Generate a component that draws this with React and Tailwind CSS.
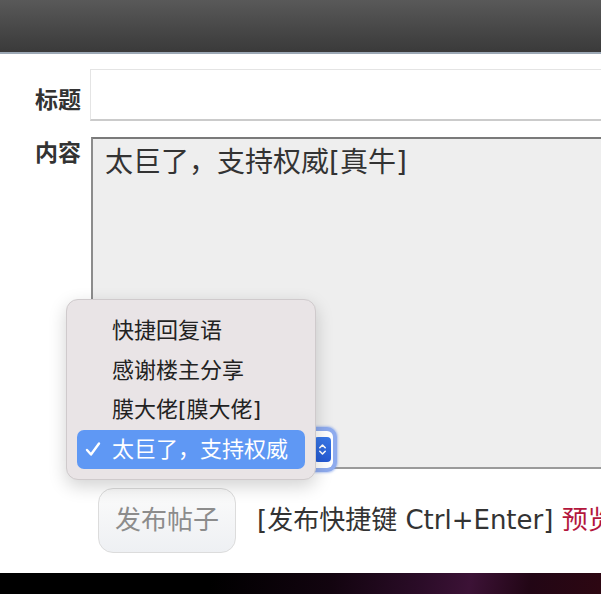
import React from 'react'

const FONT = { fontFamily: '"DejaVu Sans", "Noto Sans CJK SC", sans-serif' }

const options = ['快捷回复语', '感谢楼主分享', '膜大佬[膜大佬]', '太巨了，支持权威']

function Stepper() {
  return (
    <svg width="9" height="15" viewBox="0 0 10 16" fill="none" stroke="white" strokeWidth="1.8" strokeLinecap="round" strokeLinejoin="round">
      <path d="M2 6 L5 3 L8 6" />
      <path d="M2 10 L5 13 L8 10" />
    </svg>
  )
}

function Check() {
  return (
    <svg width="16" height="16" viewBox="0 0 16 16" fill="none" stroke="currentColor" strokeWidth="2.4" strokeLinecap="round" strokeLinejoin="round">
      <path d="M2 9 L6 13.5 L14 2.5" />
    </svg>
  )
}

function QuickReplyMenu({ selected }) {
  return (
    <div className="absolute left-[66px] top-[299px] w-[250px] h-[181px] rounded-[12px] border border-[#cfcacc] bg-[#e9e4e6] shadow-[0_6px_18px_rgba(0,0,0,0.18)] pt-[11px] px-[10px]">
      {options.map((o, i) => {
        const on = i === selected
        return (
          <div
            key={o}
            className={`flex items-center h-[39.5px] rounded-[7px] text-[22px] ${on ? 'bg-[#5f98f4] text-white' : 'text-[#222]'}`}
          >
            <span className="w-[35px] pl-[8px] flex items-center">{on ? <Check /> : null}</span>
            <span className="whitespace-nowrap">{o}</span>
          </div>
        )
      })}
    </div>
  )
}

export default function App() {
  return (
    <div className="relative w-[601px] h-[594px] overflow-hidden bg-white flex flex-col" style={FONT}>
      <div className="h-[54px] shrink-0 bg-gradient-to-b from-[#595959] to-[#3a3a3a] border-b-2 border-[#9ca8b5]" />

      <div className="pt-[15px] flex flex-col">
        <div className="flex">
          <div className="w-[90px] shrink-0 text-right pr-[9px] pt-[16px] text-[23px] leading-[30px] font-bold text-[#333]">标题</div>
          <div className="w-[560px] shrink-0 h-[52px] bg-white border-t border-l border-[#e4e4e4] border-b-2 border-b-[#cbcbcb]" />
        </div>

        <div className="flex mt-[16px]">
          <div className="w-[90px] shrink-0 text-right pr-[9px] pt-[1px] text-[23px] leading-[30px] font-bold text-[#333]">内容</div>
          <div className="w-[560px] shrink-0 h-[332px] ml-[1px] bg-[#eeeeee] border-2 border-[#8c8c8c] border-t-[#7a7a7a] border-b-[#9a9a9a] pl-[12px] pt-[6px] text-[28px] leading-[36px] text-[#333] whitespace-nowrap">
            太巨了，支持权威[真牛]
          </div>
        </div>

        <div className="flex items-center mt-[19px] pl-[98px]">
          <button className="w-[138px] shrink-0 h-[65px] rounded-[15px] border border-[#dcdcdc] bg-gradient-to-b from-[#fbfbfb] to-[#eef0f3] text-[26px] text-[#8c8c8c]">
            发布帖子
          </button>
          <div className="ml-[21px] shrink-0 text-[26px] text-[#333] whitespace-nowrap">
            [发布快捷键 Ctrl+Enter] <span className="text-[#b3163c]">预览</span>
          </div>
        </div>
      </div>

      <div className="flex-1" />
      <div className="h-[21px] shrink-0 bg-[linear-gradient(100deg,#000_0%,#000_35%,#12040f_55%,#2b0c28_70%,#3c1236_78%,#220615_88%,#2d0712_100%)]" />

      {/* native select behind its open popup */}
      <div className="absolute left-[236px] top-[427px] w-[101px] h-[45px] rounded-[10px] bg-[#8eabee] p-[4px] shadow-[0_0_2px_1px_rgba(120,155,235,0.5)]">
        <div className="w-full h-full rounded-[6px] bg-white flex items-center justify-end pr-[2px]">
          <div className="w-[17px] h-[25px] rounded-[4px] bg-gradient-to-b from-[#3a78e8] to-[#2459d3] flex items-center justify-center">
            <Stepper />
          </div>
        </div>
      </div>

      <QuickReplyMenu selected={3} />
    </div>
  )
}
